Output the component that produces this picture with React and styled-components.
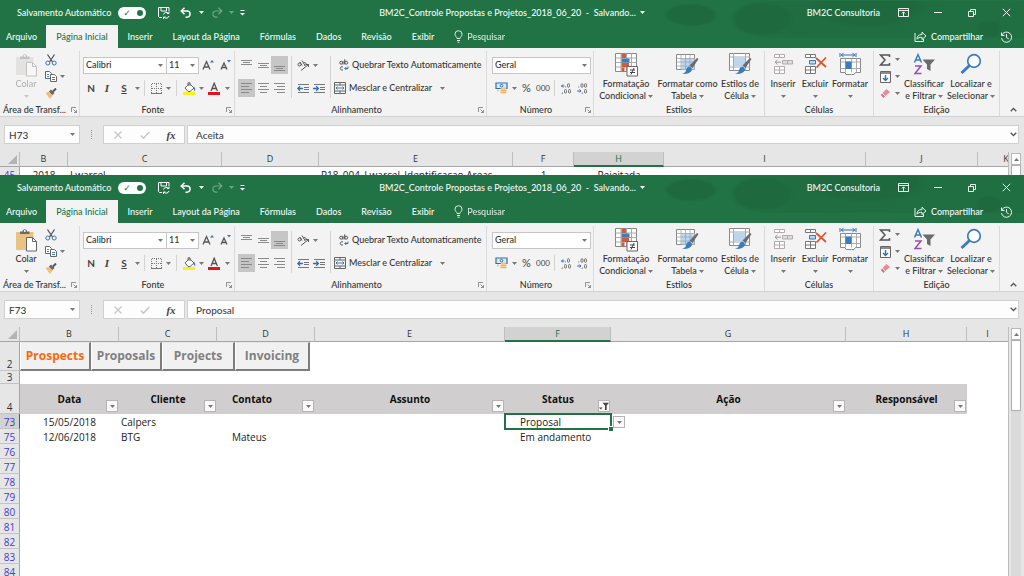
import React from 'react';
import styled, { createGlobalStyle, css } from 'styled-components';

const UI_FONT = 'Lato, "Open Sans", sans-serif';
const CELL_FONT = '"Open Sans", Lato, sans-serif';

const GlobalStyle = createGlobalStyle`
  * {
    box-sizing: border-box;
  }

  body {
    margin: 0;
    background: #e6e6e6;
    font-family: ${UI_FONT};
    font-size: 9px;
    font-weight: 500;
    line-height: 12px;
    color: #333;
  }

  button,
  input,
  select {
    margin: 0;
    padding: 0;
    border: 0;
    background: transparent;
    color: inherit;
    font: inherit;
    outline: none;
  }
`;

const Page = styled.div`
  display: flex;
  flex-direction: column;
  height: 100vh;
  overflow: hidden;
`;

const Window = styled.section`
  display: flex;
  flex-direction: column;
  min-height: 0;
  overflow: hidden;
  flex: ${({ $peek }) => ($peek ? '0 0 175px' : '1')};
`;

const Blob = 'radial-gradient(closest-side, #1e6a3e 80%, transparent)';

const GreenHeader = styled.header`
  flex: none;
  color: #f4faf6;
  background: ${Blob} right 305px top 3px / 56px 24px no-repeat,
    ${Blob} right 229px top 1px / 66px 36px no-repeat,
    ${Blob} right 94px top -14px / 124px 42px no-repeat,
    ${Blob} right 22px top 20px / 26px 18px no-repeat,
    linear-gradient(90deg, transparent, #1f6d40 20%, #206f43) right top / 290px
      38px no-repeat,
    #217346;
  box-shadow: inset 0 1px ${({ $line }) => $line};
`;

const TitleBar = styled.div`
  display: grid;
  grid-template-columns: 1fr auto 1fr;
  align-items: center;
  height: 25px;
  white-space: nowrap;
`;

const QuickAccess = styled.div`
  display: flex;
  align-items: center;
  padding-left: 17px;

  label {
    display: flex;
    align-items: center;
    gap: 7px;
    margin-right: 10px;
  }
`;

const Toggle = styled.input`
  appearance: none;
  width: 28px;
  height: 12px;
  border-radius: 6px;
  background: #fff;

  &::before {
    content: '✓';
    display: block;
    padding-left: 5px;
    color: #217346;
    font: bold 9px/12px 'DejaVu Sans', sans-serif;
  }

  &::after {
    content: '';
    display: block;
    width: 6px;
    height: 6px;
    margin: -9px 0 0 19px;
    border-radius: 50%;
    background: #217346;
  }
`;

const DocTitle = styled.div`
  display: flex;
  align-items: center;
  gap: 4px;
`;

const WindowButtons = styled.div`
  display: flex;
  align-items: center;
  justify-content: flex-end;

  span {
    margin-right: 6px;
  }
`;

const IconButton = styled.button`
  display: inline-flex;
  align-items: center;
  justify-content: center;
  flex: none;
  width: ${({ $w }) => $w || 16}px;
  height: ${({ $h }) => $h || 18}px;
  background: ${({ $on }) => ($on ? '#c6c6c6' : 'transparent')};
  opacity: ${({ $faded }) => ($faded ? 0.35 : 1)};

  svg {
    display: block;
  }
`;

const TabBar = styled.nav`
  display: flex;
  align-items: stretch;
  height: 23px;
  padding-right: 5px;
`;

const Tab = styled.a`
  display: flex;
  align-items: center;
  padding: 0 10px;
  color: inherit;
  text-decoration: none;
  white-space: nowrap;

  &:first-child {
    padding: 0 9px 0 6px;
  }

  ${({ $active }) =>
    $active &&
    css`
      background: #f3f3f3;
      color: #217346;
    `}
`;

const TabAction = styled.button`
  display: flex;
  align-items: center;
  gap: 4px;
  margin-left: ${({ $push }) => ($push ? 'auto' : '0')};
  padding: 0 10px;
  opacity: ${({ $soft }) => ($soft ? 0.85 : 1)};
`;

const RibbonBar = styled.div`
  flex: none;
  display: grid;
  grid-template-columns: 80px 155px 252px 107px 171px 109px 126px 1fr;
  height: 69px;
  background: #f3f3f3;
  border-bottom: 1px solid #d2d2d2;
`;

const Group = styled.section`
  display: flex;
  flex-direction: column;
  margin-top: 3px;
  border-right: 1px solid #dadada;
`;

const GroupBody = styled.div`
  flex: 1;
  display: flex;
  padding: 0 ${({ $pad }) => $pad || 0}px;
`;

const GroupFooter = styled.footer`
  display: grid;
  grid-template-columns: 1fr ${({ $launcher }) => ($launcher ? '8px' : '')};
  align-items: center;
  height: 12px;
  text-align: center;
  white-space: nowrap;

  ${({ $wide }) =>
    $wide &&
    css`
      padding-left: 3px;
      text-align: left;
    `}
`;

const Rows = styled.div`
  display: flex;
  flex-direction: column;
  gap: 5px;
  padding-top: 5px;
`;

const Row = styled.div`
  display: flex;
  align-items: center;
  height: 18px;
`;

const Divider = styled.i`
  width: 1px;
  height: 16px;
  margin: 0 ${({ $gap }) => $gap || 4}px;
  background: #d4d4d4;
`;

const TallDivider = styled(Divider)`
  height: 42px;
  margin-top: 5px;
`;

const Stack = styled.div`
  display: flex;
  flex-direction: column;
  width: ${({ $w }) => $w}px;
`;

const StackRow = styled.div`
  display: flex;
  align-items: center;
  height: 17px;
`;

const BigButton = styled.button`
  display: flex;
  flex-direction: column;
  align-items: center;
  flex: none;
  width: ${({ $w }) => $w}px;
  padding-top: 1px;
  white-space: nowrap;
  opacity: ${({ $faded }) => ($faded ? 0.35 : 1)};
  filter: ${({ $faded }) => ($faded ? 'grayscale(0.9)' : 'none')};

  > svg {
    height: 26px;
    flex: none;
  }

  > span {
    height: 12px;
    display: flex;
    align-items: center;
    gap: 2px;
  }
`;

const TextButton = styled.button`
  display: flex;
  align-items: center;
  gap: 3px;
  height: 18px;
  white-space: nowrap;

  > svg:last-child {
    margin-left: 5px;
  }
`;

const Combo = styled.div`
  display: flex;
  align-items: center;
  width: ${({ $w }) => $w}px;
  height: 17px;
  margin-right: -1px;
  padding: 0 3px 0 2px;
  border: 1px solid #c6c6c6;
  background: #fff;

  select {
    appearance: none;
    flex: 1;
    min-width: 0;
  }
`;

const Letter = styled.span`
  font-size: ${({ $size }) => $size || 10}px;
  font-weight: ${({ $bold }) => ($bold ? 700 : 400)};
  font-style: ${({ $italic }) => ($italic ? 'italic' : 'normal')};
  font-family: ${({ $italic }) =>
    $italic ? '"Liberation Serif", serif' : 'inherit'};
  text-decoration: ${({ $under }) => ($under ? 'underline' : 'none')};
  color: #444;
`;

const Collapse = styled.div`
  display: flex;
  align-items: flex-end;
  justify-content: flex-end;
  padding: 0 3px 0 0;
`;

const FormulaRow = styled.div`
  flex: none;
  display: flex;
  align-items: center;
  padding: 8px 5px 8px 4px;
  background: #e6e6e6;
  color: #444;
`;

const FieldBox = styled.div`
  display: flex;
  align-items: center;
  height: 19px;
  border: 1px solid #d0d0d0;
  background: #fdfdfd;
  width: ${({ $w }) => ($w ? `${$w}px` : 'auto')};
  flex: ${({ $w }) => ($w ? 'none' : '1')};
  padding-left: ${({ $pad }) => $pad || 0}px;

  & + & {
    margin-left: 2px;
  }

  input {
    flex: 1;
    min-width: 0;
    font-size: 10px;
  }
`;

const Grip = styled.i`
  width: 1px;
  height: 9px;
  margin: 0 11px;
  border-left: 1px dotted #999;
`;

const SheetArea = styled.div`
  flex: 1;
  display: flex;
  min-height: 0;
  overflow: hidden;
`;

const Grid = styled.table`
  flex: 1;
  align-self: flex-start;
  width: 0;
  table-layout: fixed;
  border-collapse: separate;
  border-spacing: 0;
  background: #fff;
  font-family: ${CELL_FONT};
  font-size: 10px;
  line-height: 12px;
  color: #222;
`;

const ColumnHead = styled.th`
  height: 15px;
  padding: 0;
  overflow: hidden;
  font-size: 9px;
  font-weight: 400;
  background: ${({ $on }) => ($on ? '#d2d2d2' : '#e6e6e6')};
  color: ${({ $on }) => ($on ? '#217346' : '#333')};
  border-right: 1px solid #bdbdbd;
  border-bottom: ${({ $on }) => ($on ? '2px solid #217346' : '1px solid #a6a6a6')};

  &:last-child {
    border-right: 0;
  }

  span {
    display: block;
    min-width: 56px;
  }
`;

const Corner = styled(ColumnHead)`
  svg {
    display: block;
    margin-left: 8px;
  }
`;

const RowHead = styled.th`
  height: ${({ $h }) => $h || 15}px;
  padding: 0;
  vertical-align: bottom;
  font-weight: 400;
  background: ${({ $on }) => ($on ? '#d2d2d2' : '#e6e6e6')};
  color: ${({ $filtered }) => ($filtered ? '#3c3cd0' : '#333')};
  border-right: 1px solid ${({ $on }) => ($on ? '#217346' : '#a6a6a6')};
  border-bottom: 1px solid #c4c4c4;
`;

const Cell = styled.td`
  position: relative;
  padding: 0 0 0 ${({ $pad }) => $pad || 0}px;
  text-align: ${({ $center }) => ($center ? 'center' : 'left')};
  white-space: nowrap;
`;

const ActiveCell = styled(Cell)`
  outline: 2px solid #217346;
  outline-offset: -1px;

  &::after {
    content: '';
    position: absolute;
    right: -2px;
    bottom: -2px;
    width: 4px;
    height: 4px;
    background: #217346;
    box-shadow: 0 0 0 1px #fff;
  }
`;

const FieldHead = styled.th`
  position: relative;
  padding: 0 0 0 ${({ $pad }) => $pad || 0}px;
  text-align: ${({ $pad }) => ($pad ? 'left' : 'center')};
  background: #d0cece;
  font-weight: 700;
  color: #111;
`;

const FilterButton = styled.button`
  position: absolute;
  right: ${({ $outside }) => ($outside ? -14 : 1)}px;
  bottom: ${({ $outside }) => ($outside ? 1 : 2)}px;
  z-index: 1;
  display: flex;
  align-items: center;
  justify-content: center;
  width: 12px;
  height: 12px;
  border: 1px solid #b4b4b4;
  background: #fafafa;
`;

const SheetButtons = styled.div`
  display: flex;
`;

const SheetButton = styled.button`
  flex: none;
  width: ${({ $w }) => $w}px;
  height: 29px;
  background: #f1f1f1;
  border: solid;
  border-width: 1px 2px 2px 1px;
  border-color: #e8e8e8 #7c7c7c #7c7c7c #fff;
  color: ${({ $active }) => ($active ? '#f9690e' : '#808080')};
  font-size: 12px;
  font-weight: 700;
`;

const ScrollTrack = styled.div`
  flex: none;
  display: flex;
  flex-direction: column;
  width: 16px;
  padding: 1px 3px 0 2px;
  border-left: 1px solid #bdbdbd;
  background: #e6e6e6;
`;

const ScrollUp = styled.button`
  display: flex;
  align-items: center;
  justify-content: center;
  flex: none;
  height: 12px;
  border: 1px solid #b8b8b8;
  background: #fff;
`;

const ScrollThumb = styled.div`
  flex: none;
  height: 71px;
  border: 1px solid #b0b0b0;
  background: #fff;
`;

const ScrollRest = styled.div`
  flex: 1;
  background: #dadada;
`;

const Caret = ({ color = '#777', up }) => (
  <svg width="5" height="3" viewBox="0 0 5 3" aria-hidden="true">
    <path d={up ? 'M0 3h5L2.5 0z' : 'M0 0h5L2.5 3z'} fill={color} />
  </svg>
);

const Svg = ({ w, h, children }) => (
  <svg
    width={w}
    height={h}
    viewBox={`0 0 ${w} ${h}`}
    fill="none"
    stroke="#666"
    aria-hidden="true"
  >
    {children}
  </svg>
);

const SaveIcon = () => (
  <Svg w={12} h={12}>
    <g stroke="#fff">
      <path d="M4 10.5H1.500L.5 9.500V.5h10.500V4M3 .5v3.500h5.500V.5" />
      <path d="M5.500 7.500a3 3 0 0 1 5-1.200M11 4.500v2H9M11 9a3 3 0 0 1-5 1.300M5.500 12v-2h2" />
    </g>
  </Svg>
);

const UndoIcon = () => (
  <Svg w={12} h={11}>
    <path d="M4.500 .8 1.200 4l3.300 3.200M1.500 4H7a3.100 3.100 0 0 1 0 6.200H5.500" stroke="#fff" strokeWidth="1.500" />
  </Svg>
);

const RedoIcon = () => (
  <Svg w={12} h={11}>
    <path d="M7.500 .8 10.800 4 7.500 7.200M10.500 4H5a3.100 3.100 0 0 0 0 6.200h1.500" stroke="#fff" strokeWidth="1.200" />
  </Svg>
);

const CustomizeIcon = () => (
  <Svg w={5} h={6}>
    <path d="M.5.5h4" stroke="#fff" />
    <path d="M0 3h5L2.500 5.500z" fill="#fff" stroke="none" />
  </Svg>
);

const RibbonOptionsIcon = () => (
  <Svg w={11} h={9}>
    <path d="M.5.5h10v8H.5zM.5 2.500h10M5.500 8V4M3.800 5.500l1.700-1.700 1.700 1.700" stroke="#fff" strokeWidth=".9" />
  </Svg>
);

const MinimizeIcon = () => (
  <Svg w={8} h={8}>
    <path d="M0 3.500h8" stroke="#fff" />
  </Svg>
);

const RestoreIcon = () => (
  <Svg w={8} h={8}>
    <path d="M.5 2.500h5v5h-5zM2.500 2.500v-2h5v5h-2" stroke="#fff" strokeWidth=".9" />
  </Svg>
);

const CloseIcon = () => (
  <Svg w={9} h={9}>
    <path d="m.8.8 7.400 7.400M8.200.8.8 8.200" stroke="#fff" />
  </Svg>
);

const BulbIcon = () => (
  <Svg w={9} h={13}>
    <path d="M3 8.500C3 7 1 6.500 1 4.200a3.500 3.500 0 0 1 7 0C8 6.500 6 7 6 8.500zM3 10.500h3M3.500 12.200h2" stroke="#fff" />
  </Svg>
);

const ShareIcon = () => (
  <Svg w={13} h={11}>
    <path d="M1 2v8.500h8.500V8M3 8.200c0-3 1.500-4.700 5-4.700V1.200l4 3.800-4 3.500V6.300C5.500 6.300 4.300 6.500 3 8.200z" stroke="#fff" strokeWidth=".9" />
  </Svg>
);

const HistoryIcon = () => (
  <Svg w={13} h={12}>
    <path d="M1.500 1.500v3h3M1.800 4.200a5.100 5.100 0 1 1-.3 3M6.500 3v3.500l2.200 1.300" stroke="#fff" strokeWidth=".9" />
  </Svg>
);

const PasteIcon = () => (
  <Svg w={22} h={24}>
    <path d="M1 4h17.500v18H1z" fill="#eac282" stroke="none" />
    <path d="M5 6V3.500h2.500C7.500.5 12 .5 12 3.500h2.500V6z" fill="#6a6a6a" stroke="none" />
    <circle cx="9.750" cy="3" r="1" fill="#fff" stroke="none" />
    <path d="M11.500 9.500h6l4 4v9.500h-10z" fill="#fff" />
    <path d="M17.500 9.500v4h4" />
  </Svg>
);

const CutIcon = () => (
  <Svg w={12} h={12}>
    <path d="m2.500.5 5 7.500M9.500.5 4.500 8" stroke="#555" strokeWidth="1.300" />
    <circle cx="2.800" cy="9" r="2" stroke="#3a76b5" />
    <circle cx="9.200" cy="9" r="2" stroke="#3a76b5" />
  </Svg>
);

const CopyIcon = () => (
  <Svg w={12} h={11}>
    <path d="M.5.5h4l2 2v5h-6z" fill="#fff" />
    <path d="M5.500 3.500h4l2 2v5h-6z" fill="#fff" />
    <path d="M2 3.500h2M2 5.500h2M7 6.500h3M7 8.500h3" stroke="#4a83bd" />
  </Svg>
);

const BrushIcon = () => (
  <Svg w={12} h={11}>
    <path d="m.5 5 4-1.500 3.500 3.500L5 11z" fill="#eebf7c" stroke="none" />
    <path d="m4 3.500 2-2L9.500 5l-2 2z" fill="#666" stroke="none" />
    <path d="m8 3.500 3-3" stroke="#555" strokeWidth="2" />
  </Svg>
);

const LauncherIcon = () => (
  <Svg w={6} h={6}>
    <path d="M.5 5V.5H5M2.500 2.500l3 3M5.500 3v2.500H3" stroke="#777" strokeWidth=".8" />
  </Svg>
);

const SizeIcon = ({ down }) => (
  <Svg w={12} h={13}>
    <path
      d={down ? 'M1 10.500 4 4 7 10.500M2.200 8.500h3.600' : 'M1 10.500 4.500 2.500 8 10.500M2.300 8h4.400'}
      strokeWidth="1.300"
      stroke="#555"
    />
    <path d={down ? 'M7 1h4L9 3.500z' : 'M8 3.500h4L10 1z'} fill="#3a76b5" stroke="none" />
  </Svg>
);

const BordersIcon = () => (
  <Svg w={11} h={11}>
    <path d="M.5 10V.5h10V10M5.500 1v9M1 5.500h9" strokeDasharray="1 1" stroke="#777" />
    <path d="M0 10.500h11" stroke="#777" />
  </Svg>
);

const FillIcon = () => (
  <Svg w={13} h={13}>
    <path d="m2 6 4.500-4.500L11 6 7 9.500H5z" fill="#fff" stroke="#666" />
    <path d="M5 4V.8h2V4" />
    <path d="M11 4.500q2 2.500 1 5L10.500 7z" fill="#3a76b5" stroke="none" />
    <path d="M0 10h12v3H0z" fill="#ffee1e" stroke="none" />
  </Svg>
);

const FontColorIcon = () => (
  <Svg w={13} h={13}>
    <path d="M3 9 6.200 1.200 9.400 9M4.200 6.500h4" stroke="#555" strokeWidth="1.300" />
    <path d="M0 10h12v3H0z" fill="#e2131a" stroke="none" />
  </Svg>
);

// every entry is [start, end] of one line of the paragraph glyph
const LINES = {
  top: [[0, 11], [2, 9], [0, 11]],
  full: [[0, 11], [0, 8], [0, 11], [0, 8]],
  center: [[0, 11], [2, 9], [0, 11], [2, 9]],
  right: [[0, 11], [3, 11], [0, 11], [3, 11]],
};

const LinesIcon = ({ kind, shift = 0 }) => (
  <Svg w={11} h={12}>
    {LINES[kind].map(([from, to], i) => (
      <path
        key={i}
        d={`M${from} ${i * (kind === 'top' ? 2 : 3) + 1.5 + shift}H${to}`}
        stroke="#8a8a8a"
      />
    ))}
  </Svg>
);

const OrientationIcon = () => (
  <Svg w={13} h={11}>
    <g stroke="#555">
      <ellipse cx="2.500" cy="4.500" rx="1.500" ry="1.500" />
      <path d="m3 2 2 3.500M5 .5l3 5M6.500 3a1.500 1.500 0 1 1 1.200 2.500M4 10.500l7.500-6M9 4.500h2.500V7" />
    </g>
  </Svg>
);

const IndentIcon = ({ out }) => (
  <Svg w={13} h={11}>
    <path d="M1 1.500h11M7 4.500h5M7 6.500h5M1 9.500h11" stroke="#777" />
    <path
      d={out ? 'M6 5.500H1M3 3.200.8 5.500 3 7.800' : 'M0 5.500h5M3.200 3.200 5.400 5.500 3.200 7.800'}
      stroke="#2f6fb5"
      strokeWidth="1.300"
    />
  </Svg>
);

const WrapIcon = () => (
  <Svg w={10} h={12}>
    <g stroke="#555">
      <circle cx="2.200" cy="3.700" r="1.500" />
      <path d="M4 2v3.500M5.700.3v5" />
      <circle cx="7.200" cy="3.700" r="1.500" />
      <path d="M4 8a1.700 1.700 0 1 0 0 2.800" />
    </g>
    <path d="M9 7.500v2H6M7.300 8 5.800 9.500 7.300 11" stroke="#2f6fb5" />
  </Svg>
);

const MergeIcon = () => (
  <Svg w={12} h={12}>
    <path d="M.5.5h11v11H.5zM.5 3h11M.5 9h11M6 .5V3M6 9v2.500" />
    <path d="M2 6h8M3.500 4.500 2 6l1.500 1.500M8.500 4.500 10 6 8.500 7.500" stroke="#2f6fb5" strokeWidth=".9" />
  </Svg>
);

const CurrencyIcon = () => (
  <Svg w={13} h={12}>
    <path d="M1 1h11v5.500H1z" fill="#dcebf7" stroke="#2f6fb5" strokeWidth="1.200" />
    <circle cx="6.500" cy="3.700" r="1.300" stroke="#2f6fb5" />
    <ellipse cx="8.500" cy="6.500" rx="3" ry="1.300" fill="#f2c57c" stroke="none" />
    <path d="M5.500 8.500h6M5.500 10.500h6M3 7.500v2" stroke="#e9b264" strokeWidth="1.300" />
  </Svg>
);

const DecimalIcon = ({ less }) => (
  <Svg w={11} h={11}>
    <g stroke="#666" strokeWidth=".9">
      <rect x={less ? 4 : 6.5} y=".7" width="2" height="3.600" rx="1" />
      {less && <rect x="7.500" y=".7" width="2" height="3.600" rx="1" />}
      {!less && <rect x="3.500" y="6.500" width="2" height="3.600" rx="1" />}
      <rect x="7.500" y="6.500" width="2" height="3.600" rx="1" />
      <path d={less ? 'M1.800 3.500v1M5.500 9.500 5 11' : 'M4.500 3.500v1M1.500 9.500 1 11'} />
    </g>
    <path
      d={less ? 'M0 8h4M2.500 6.500 4 8 2.500 9.500' : 'M.5 3h3M2 1.500.5 3 2 4.500'}
      stroke="#2f6fb5"
    />
  </Svg>
);

const ConditionalIcon = () => (
  <Svg w={23} h={24}>
    <path d="M.5.5h21v18H.5z" fill="#fff" stroke="#888" />
    <path d="M.5 5h21M.5 9.500h21M.5 14h21M6 .5v18M11.500.5v18M16.500.5v18" stroke="#aaa" />
    <path d="M6.500 1h4.500v4H6.500zM6.500 10H14v4H6.500zM6.500 14.500h3v4h-3z" fill="#cf5a3c" stroke="none" />
    <path d="M6.500 5.500h8v4h-8z" fill="#3f7dbf" stroke="none" />
    <path d="M12 13.500h10.500V23H12z" fill="#fff" />
    <path d="M15 17h5M15 19.500h5M19 15l-3 6.500" stroke="#444" />
  </Svg>
);

const BrushOverlay = () => (
  <g stroke="none">
    <path d="m21 5 1.500 1-6 9-3-2.500z" fill="#6b6b6b" />
    <path d="M13 13.500q3 .5 3 3.500-2 4.500-10 4 4-1.500 4-4 .5-3 3-3.500z" fill="#3a7cc0" />
  </g>
);

const FormatTableIcon = () => (
  <Svg w={23} h={24}>
    <path d="M.5 1.500h18v15H.5z" fill="#fff" stroke="#888" />
    <path d="M5.500 5.500h13v11h-13z" fill="#bcd6ee" stroke="none" />
    <path d="M.5 5.500h18M.5 9h18M.5 13h18M5 1.500v15M9.500 1.500v15M14 1.500v15" stroke="#9aa6b2" strokeWidth=".8" />
    <BrushOverlay />
  </Svg>
);

const CellStyleIcon = () => (
  <Svg w={23} h={24}>
    <path d="M.5.5h20v17H.5z" fill="#fff" stroke="#888" />
    <path d="M.5 4h20M.5 14h20M4.500.5v17M16.500.5v17" stroke="#aaa" />
    <path d="M5 4.500h11v9H5z" fill="#bcd6ee" stroke="none" />
    <BrushOverlay />
  </Svg>
);

const InsertCellsIcon = () => (
  <Svg w={21} h={24}>
    <g stroke="#b3abb0">
      <path d="M1.500 1.500h10v3h-10zM6.500 1.500v3M1.500 13.500h10v7h-10zM1.500 17h10M6.500 13.500v7" fill="#fff" />
      <path d="M9.500 7.500h10v3.500h-10zM14.500 7.500V11" fill="#ddd" />
    </g>
    <path d="M8 9.200H2M4.500 7 2 9.200l2.500 2.300" stroke="#999" />
  </Svg>
);

const DeleteCellsIcon = () => (
  <Svg w={23} h={24}>
    <path d="M1.500 1.500h10v3h-10zM6.500 1.500v3M1.500 13.500h10v7h-10zM1.500 17h10M6.500 13.500v7" fill="#fff" stroke="#777" />
    <path d="M5.500 7.500h6V11h-6z" fill="#bcd6ee" stroke="#3a76b5" />
    <path d="m12 5 10 9M22 4.500 12.500 14.500" stroke="#d9552f" strokeWidth="1.800" />
  </Svg>
);

const FormatCellsIcon = () => (
  <Svg w={23} h={24}>
    <path d="M1 0v4M17 0v4M2 2h14M4.500.2 2.200 2l2.300 1.800M13.500.2 15.800 2l-2.300 1.800" stroke="#2f6fb5" />
    <path d="M1.500 5.500h20v14h-5q-1 3-4 2H7l-1-2H1.500z" fill="#fff" stroke="#888" />
    <path d="M1.500 9h20M1.500 15.500h20M6.500 5.500v14M12.500 5.500v14M17.500 5.500v14" stroke="#aaa" />
    <path d="M6.500 8.500h6V16h-6z" fill="#3a7cc0" stroke="none" />
  </Svg>
);

const SumIcon = () => (
  <Svg w={12} h={12}>
    <path d="M10.500 3V1H1.500L6 6l-4.500 5h9V9" stroke="#555" strokeWidth="1.500" />
  </Svg>
);

const FillDownIcon = () => (
  <Svg w={11} h={12}>
    <path d="M.5.5h10v11H.5z" fill="#fff" />
    <path d="M.5 2h10" strokeWidth="1.500" />
    <path d="M5.500 4v5.500M3 7l2.500 2.500L8 7" stroke="#2f6fb5" strokeWidth="1.400" />
  </Svg>
);

const EraserIcon = () => (
  <Svg w={11} h={11}>
    <path d="M6.500 1 10 4 5.500 8 2.500 5z" fill="#e88b98" stroke="none" />
    <path d="m2 5.500 3 3L3.500 10 .8 7z" fill="#d96f80" stroke="none" />
  </Svg>
);

const SortIcon = () => (
  <Svg w={23} h={24}>
    <path d="M1.500 9.500 5 1.500l3.500 8M2.800 7h4.500" stroke="#3a7cc0" strokeWidth="1.500" />
    <path d="M2 13h6l-6 7.500h6.500" stroke="#9a4db3" strokeWidth="1.500" />
    <path d="M9.500 6.500H22l-4.500 5V18L14 16v-4.500z" fill="#6b6b6b" stroke="none" />
  </Svg>
);

const FindIcon = () => (
  <Svg w={22} h={24}>
    <circle cx="14" cy="8" r="6.300" stroke="#3a7cc0" strokeWidth="1.700" fill="#fff" />
    <path d="m9.500 12.500-8 7.500" stroke="#3a7cc0" strokeWidth="3" />
  </Svg>
);

const ChevronIcon = ({ up }) => (
  <Svg w={7} h={5}>
    <path d={up ? 'M.7 4.300 3.500 1.500l2.800 2.800' : 'M.7.7l2.800 2.800L6.300.7'} stroke="#555" strokeWidth="1.300" />
  </Svg>
);

const FunnelIcon = () => (
  <Svg w={10} h={9}>
    <path d="M3.500.8H10L7.700 3.500V8H6V3.500z" fill="#444" stroke="none" />
    <path d="M0 5.500h3.500L1.750 7.500z" fill="#444" stroke="none" />
  </Svg>
);

const TABS = [
  'Arquivo',
  'Página Inicial',
  'Inserir',
  'Layout da Página',
  'Fórmulas',
  'Dados',
  'Revisão',
  'Exibir',
];

const Drop = ({ color, w = 12, faded, label }) => (
  <IconButton $w={w} $faded={faded} aria-label={label}>
    <Caret color={color} />
  </IconButton>
);

function AppHeader({ line }) {
  return (
    <GreenHeader $line={line}>
      <TitleBar>
        <QuickAccess>
          <label>
            Salvamento Automático
            <Toggle type="checkbox" role="switch" defaultChecked />
          </label>
          <IconButton aria-label="Salvar"><SaveIcon /></IconButton>
          <IconButton $w={27} aria-label="Desfazer"><UndoIcon /></IconButton>
          <Drop color="#fff" w={5} label="Opções de desfazer" />
          <IconButton $w={25} $faded aria-label="Refazer"><RedoIcon /></IconButton>
          <Drop color="#fff" w={5} faded label="Opções de refazer" />
          <IconButton $w={16} aria-label="Personalizar"><CustomizeIcon /></IconButton>
        </QuickAccess>
        <DocTitle>
          BM2C_Controle Propostas e Projetos_2018_06_20&nbsp; -&nbsp; Salvando...
          <Caret color="#fff" />
        </DocTitle>
        <WindowButtons>
          <span>BM2C Consultoria</span>
          <IconButton $w={35} aria-label="Opções da faixa"><RibbonOptionsIcon /></IconButton>
          <IconButton $w={34} aria-label="Minimizar"><MinimizeIcon /></IconButton>
          <IconButton $w={34} aria-label="Restaurar"><RestoreIcon /></IconButton>
          <IconButton $w={35} aria-label="Fechar"><CloseIcon /></IconButton>
        </WindowButtons>
      </TitleBar>
      <TabBar>
        {TABS.map((name) => (
          <Tab key={name} href="#" $active={name === 'Página Inicial'}>
            {name}
          </Tab>
        ))}
        <TabAction $soft>
          <BulbIcon /> Pesquisar
        </TabAction>
        <TabAction $push>
          <ShareIcon /> Compartilhar
        </TabAction>
        <IconButton $w={26} $h={23} aria-label="Histórico"><HistoryIcon /></IconButton>
      </TabBar>
    </GreenHeader>
  );
}

function RibbonGroup({ title, launcher, wide, pad, children }) {
  return (
    <Group>
      <GroupBody $pad={pad}>{children}</GroupBody>
      <GroupFooter $wide={wide} $launcher={launcher}>
        <span>{title}</span>
        {launcher && <LauncherIcon />}
      </GroupFooter>
    </Group>
  );
}

function Ribbon({ canPaste }) {
  return (
    <RibbonBar>
      <RibbonGroup title="Área de Transf..." launcher wide pad={8}>
        <BigButton $w={36} $faded={!canPaste}>
          <PasteIcon />
          <span>Colar</span>
          <span><Caret /></span>
        </BigButton>
        <Stack $w={24}>
          <StackRow><IconButton $w={13} aria-label="Recortar"><CutIcon /></IconButton></StackRow>
          <StackRow>
            <IconButton $w={13} aria-label="Copiar"><CopyIcon /></IconButton>
            <Drop w={10} label="Opções de cópia" />
          </StackRow>
          <StackRow><IconButton $w={13} aria-label="Pincel"><BrushIcon /></IconButton></StackRow>
        </Stack>
      </RibbonGroup>

      <RibbonGroup title="Fonte" launcher pad={3}>
        <Rows>
          <Row>
            <Combo $w={84}>
              <select aria-label="Fonte"><option>Calibri</option></select>
              <Caret />
            </Combo>
            <Combo $w={33}>
              <select aria-label="Tamanho"><option>11</option></select>
              <Caret />
            </Combo>
            <IconButton $w={20} aria-label="Aumentar fonte"><SizeIcon /></IconButton>
            <IconButton aria-label="Diminuir fonte"><SizeIcon down /></IconButton>
          </Row>
          <Row>
            <IconButton><Letter $bold>N</Letter></IconButton>
            <IconButton><Letter $italic $bold $size={11}>I</Letter></IconButton>
            <IconButton $w={18}><Letter $bold $under>S</Letter></IconButton>
            <Drop w={8} label="Sublinhado" />
            <Divider $gap={3} />
            <IconButton aria-label="Bordas"><BordersIcon /></IconButton>
            <Drop w={8} label="Opções de borda" />
            <Divider />
            <IconButton aria-label="Preenchimento"><FillIcon /></IconButton>
            <Drop w={8} label="Cor de preenchimento" />
            <IconButton $w={18} aria-label="Cor da fonte"><FontColorIcon /></IconButton>
            <Drop w={8} label="Opções de cor" />
          </Row>
        </Rows>
      </RibbonGroup>

      <RibbonGroup title="Alinhamento" launcher pad={3}>
        <Rows>
          <Row>
            <IconButton $w={17} aria-label="Topo"><LinesIcon kind="top" /></IconButton>
            <IconButton aria-label="Meio"><LinesIcon kind="top" shift={3} /></IconButton>
            <IconButton $w={17} $on aria-label="Base"><LinesIcon kind="top" shift={6} /></IconButton>
          </Row>
          <Row>
            <IconButton $w={17} $on aria-label="Esquerda"><LinesIcon kind="full" /></IconButton>
            <IconButton aria-label="Centro"><LinesIcon kind="center" /></IconButton>
            <IconButton $w={17} aria-label="Direita"><LinesIcon kind="right" /></IconButton>
          </Row>
        </Rows>
        <TallDivider $gap={3} />
        <Rows>
          <Row>
            <IconButton aria-label="Orientação"><OrientationIcon /></IconButton>
            <Drop w={8} label="Opções de orientação" />
          </Row>
          <Row>
            <IconButton aria-label="Diminuir recuo"><IndentIcon out /></IconButton>
            <IconButton aria-label="Aumentar recuo"><IndentIcon /></IconButton>
          </Row>
        </Rows>
        <TallDivider $gap={3} />
        <Rows>
          <Row><TextButton><WrapIcon />Quebrar Texto Automaticamente</TextButton></Row>
          <Row><TextButton><MergeIcon />Mesclar e Centralizar<Caret /></TextButton></Row>
        </Rows>
      </RibbonGroup>

      <RibbonGroup title="Número" launcher pad={5}>
        <Rows>
          <Row>
            <Combo $w={99}>
              <select aria-label="Formato do número"><option>Geral</option></select>
              <Caret />
            </Combo>
          </Row>
          <Row>
            <IconButton $w={18} aria-label="Moeda"><CurrencyIcon /></IconButton>
            <Drop w={8} label="Moedas" />
            <IconButton $w={17}><Letter $size={11}>%</Letter></IconButton>
            <IconButton $w={16}><Letter $size={8}>000</Letter></IconButton>
            <Divider $gap={3} />
            <IconButton aria-label="Aumentar casas"><DecimalIcon /></IconButton>
            <IconButton aria-label="Diminuir casas"><DecimalIcon less /></IconButton>
          </Row>
        </Rows>
      </RibbonGroup>

      <RibbonGroup title="Estilos" pad={2}>
        <BigButton $w={60}>
          <ConditionalIcon />
          <span>Formatação</span>
          <span>Condicional <Caret /></span>
        </BigButton>
        <BigButton $w={63}>
          <FormatTableIcon />
          <span>Formatar como</span>
          <span>Tabela <Caret /></span>
        </BigButton>
        <BigButton $w={42}>
          <CellStyleIcon />
          <span>Estilos de</span>
          <span>Célula <Caret /></span>
        </BigButton>
      </RibbonGroup>

      <RibbonGroup title="Células" pad={2}>
        <BigButton $w={32}>
          <InsertCellsIcon />
          <span>Inserir</span>
          <span><Caret /></span>
        </BigButton>
        <BigButton $w={32}>
          <DeleteCellsIcon />
          <span>Excluir</span>
          <span><Caret /></span>
        </BigButton>
        <BigButton $w={38}>
          <FormatCellsIcon />
          <span>Formatar</span>
          <span><Caret /></span>
        </BigButton>
      </RibbonGroup>

      <RibbonGroup title="Edição" pad={3}>
        <Stack $w={26}>
          <StackRow>
            <IconButton aria-label="Soma"><SumIcon /></IconButton>
            <Drop w={8} label="Funções" />
          </StackRow>
          <StackRow>
            <IconButton aria-label="Preencher"><FillDownIcon /></IconButton>
            <Drop w={8} label="Opções de preencher" />
          </StackRow>
          <StackRow>
            <IconButton aria-label="Limpar"><EraserIcon /></IconButton>
            <Drop w={8} label="Opções de limpar" />
          </StackRow>
        </Stack>
        <BigButton $w={44}>
          <SortIcon />
          <span>Classificar</span>
          <span>e Filtrar <Caret /></span>
        </BigButton>
        <BigButton $w={50}>
          <FindIcon />
          <span>Localizar e</span>
          <span>Selecionar <Caret /></span>
        </BigButton>
      </RibbonGroup>

      <Collapse>
        <IconButton aria-label="Recolher faixa" $h={14}><ChevronIcon up /></IconButton>
      </Collapse>
    </RibbonBar>
  );
}

function FormulaBar({ cell, value }) {
  return (
    <FormulaRow>
      <FieldBox $w={76} $pad={4}>
        <input aria-label="Caixa de nome" defaultValue={cell} />
        <Drop w={14} label="Nomes" />
      </FieldBox>
      <Grip />
      <FieldBox $w={82}>
        <IconButton $w={27} $faded aria-label="Cancelar">
          <Svg w={8} h={8}><path d="m.5.5 7 7M7.500.5l-7 7" strokeWidth="1.400" /></Svg>
        </IconButton>
        <IconButton $w={27} $faded aria-label="Inserir valor">
          <Svg w={10} h={8}><path d="m.8 4.500 2.700 2.700L9.200 1" strokeWidth="1.600" /></Svg>
        </IconButton>
        <IconButton $w={26}><Letter $italic $bold $size={11}>fx</Letter></IconButton>
      </FieldBox>
      <FieldBox $pad={8}>
        <input aria-label="Barra de fórmulas" defaultValue={value} />
        <IconButton $w={10} aria-label="Expandir"><ChevronIcon /></IconButton>
      </FieldBox>
    </FormulaRow>
  );
}

function SheetHead({ columns, active }) {
  return (
    <>
      <colgroup>
        <col width="20" />
        {columns.map(([name, width]) => (
          <col key={name} width={width} />
        ))}
      </colgroup>
      <thead>
        <tr>
          <Corner>
            <Svg w={9} h={9}><path d="M9 0v9H0z" fill="#b4b4b4" stroke="none" /></Svg>
          </Corner>
          {columns.map(([name]) => (
            <ColumnHead key={name} scope="col" $on={name === active}>
              {name === 'K' ? <span>{name}</span> : name}
            </ColumnHead>
          ))}
        </tr>
      </thead>
    </>
  );
}

function Scrollbar() {
  return (
    <ScrollTrack>
      <ScrollUp aria-label="Rolar para cima"><Caret up /></ScrollUp>
      <ScrollThumb />
      <ScrollRest />
    </ScrollTrack>
  );
}

const PROJECT_COLUMNS = [
  ['B', 48],
  ['C', 154],
  ['D', 97],
  ['E', 194],
  ['F', 61],
  ['H', 90],
  ['I', 202],
  ['J', 112],
  ['K'],
];

const PROSPECT_COLUMNS = [
  ['B', 99],
  ['C', 98],
  ['D', 98],
  ['E', 190],
  ['F', 106],
  ['G', 235],
  ['H', 121],
  ['I'],
];

const SHEET_LINKS = [
  ['Prospects', 71],
  ['Proposals', 71],
  ['Projects', 73],
  ['Invoicing', 75],
];

const EMPTY_ROWS = [76, 77, 78, 79, 80, 81, 82, 83, 84];

function ProjectsSheet() {
  return (
    <Grid>
      <SheetHead columns={PROJECT_COLUMNS} active="H" />
      <tbody>
        <tr>
          <RowHead scope="row" $filtered>45</RowHead>
          <Cell $center>2018</Cell>
          <Cell $pad={2}>Lwarcel</Cell>
          <Cell />
          <Cell $pad={2}>P18_004_Lwarcel_Identificacao Areas</Cell>
          <Cell $center>1</Cell>
          <Cell $center>Rejeitada</Cell>
          <Cell colSpan={3} />
        </tr>
      </tbody>
    </Grid>
  );
}

function ProspectsSheet() {
  const span = PROSPECT_COLUMNS.length;
  return (
    <Grid>
      <SheetHead columns={PROSPECT_COLUMNS} active="F" />
      <tbody>
        <tr>
          <RowHead scope="row" $h={29}>2</RowHead>
          <Cell colSpan={span}>
            <SheetButtons>
              {SHEET_LINKS.map(([name, width]) => (
                <SheetButton key={name} $w={width} $active={name === 'Prospects'}>
                  {name}
                </SheetButton>
              ))}
            </SheetButtons>
          </Cell>
        </tr>
        <tr>
          <RowHead scope="row" $h={13}>3</RowHead>
          <Cell colSpan={span} />
        </tr>
        <tr>
          <RowHead scope="row" $h={30}>4</RowHead>
          {['Data', 'Cliente', 'Contato', 'Assunto', 'Status', 'Ação', 'Responsável'].map(
            (name) => (
              <FieldHead key={name} scope="col" $pad={name === 'Contato' ? 15 : 0}>
                {name}
                <FilterButton aria-label={`Filtrar ${name}`}>
                  {name === 'Status' ? <FunnelIcon /> : <Caret />}
                </FilterButton>
              </FieldHead>
            )
          )}
          <Cell />
        </tr>
        <tr>
          <RowHead scope="row" $filtered $on>73</RowHead>
          <Cell $center>15/05/2018</Cell>
          <Cell $pad={2}>Calpers</Cell>
          <Cell />
          <Cell />
          <ActiveCell $pad={15}>
            Proposal
            <FilterButton $outside aria-label="Escolher status"><Caret /></FilterButton>
          </ActiveCell>
          <Cell colSpan={3} />
        </tr>
        <tr>
          <RowHead scope="row" $filtered>75</RowHead>
          <Cell $center>12/06/2018</Cell>
          <Cell $pad={2}>BTG</Cell>
          <Cell $pad={15}>Mateus</Cell>
          <Cell />
          <Cell $pad={15}>Em andamento</Cell>
          <Cell colSpan={3} />
        </tr>
        {EMPTY_ROWS.map((row) => (
          <tr key={row}>
            <RowHead scope="row" $filtered>{row}</RowHead>
            <Cell colSpan={span} />
          </tr>
        ))}
      </tbody>
    </Grid>
  );
}

function App() {
  return (
    <Page>
      <GlobalStyle />
      <Window $peek>
        <AppHeader line="#217346" />
        <Ribbon />
        <FormulaBar cell="H73" value="Aceita" />
        <SheetArea>
          <ProjectsSheet />
          <Scrollbar />
        </SheetArea>
      </Window>
      <Window>
        <AppHeader line="#3f5f50" />
        <Ribbon canPaste />
        <FormulaBar cell="F73" value="Proposal" />
        <SheetArea>
          <ProspectsSheet />
          <Scrollbar />
        </SheetArea>
      </Window>
    </Page>
  );
}

export default App;
